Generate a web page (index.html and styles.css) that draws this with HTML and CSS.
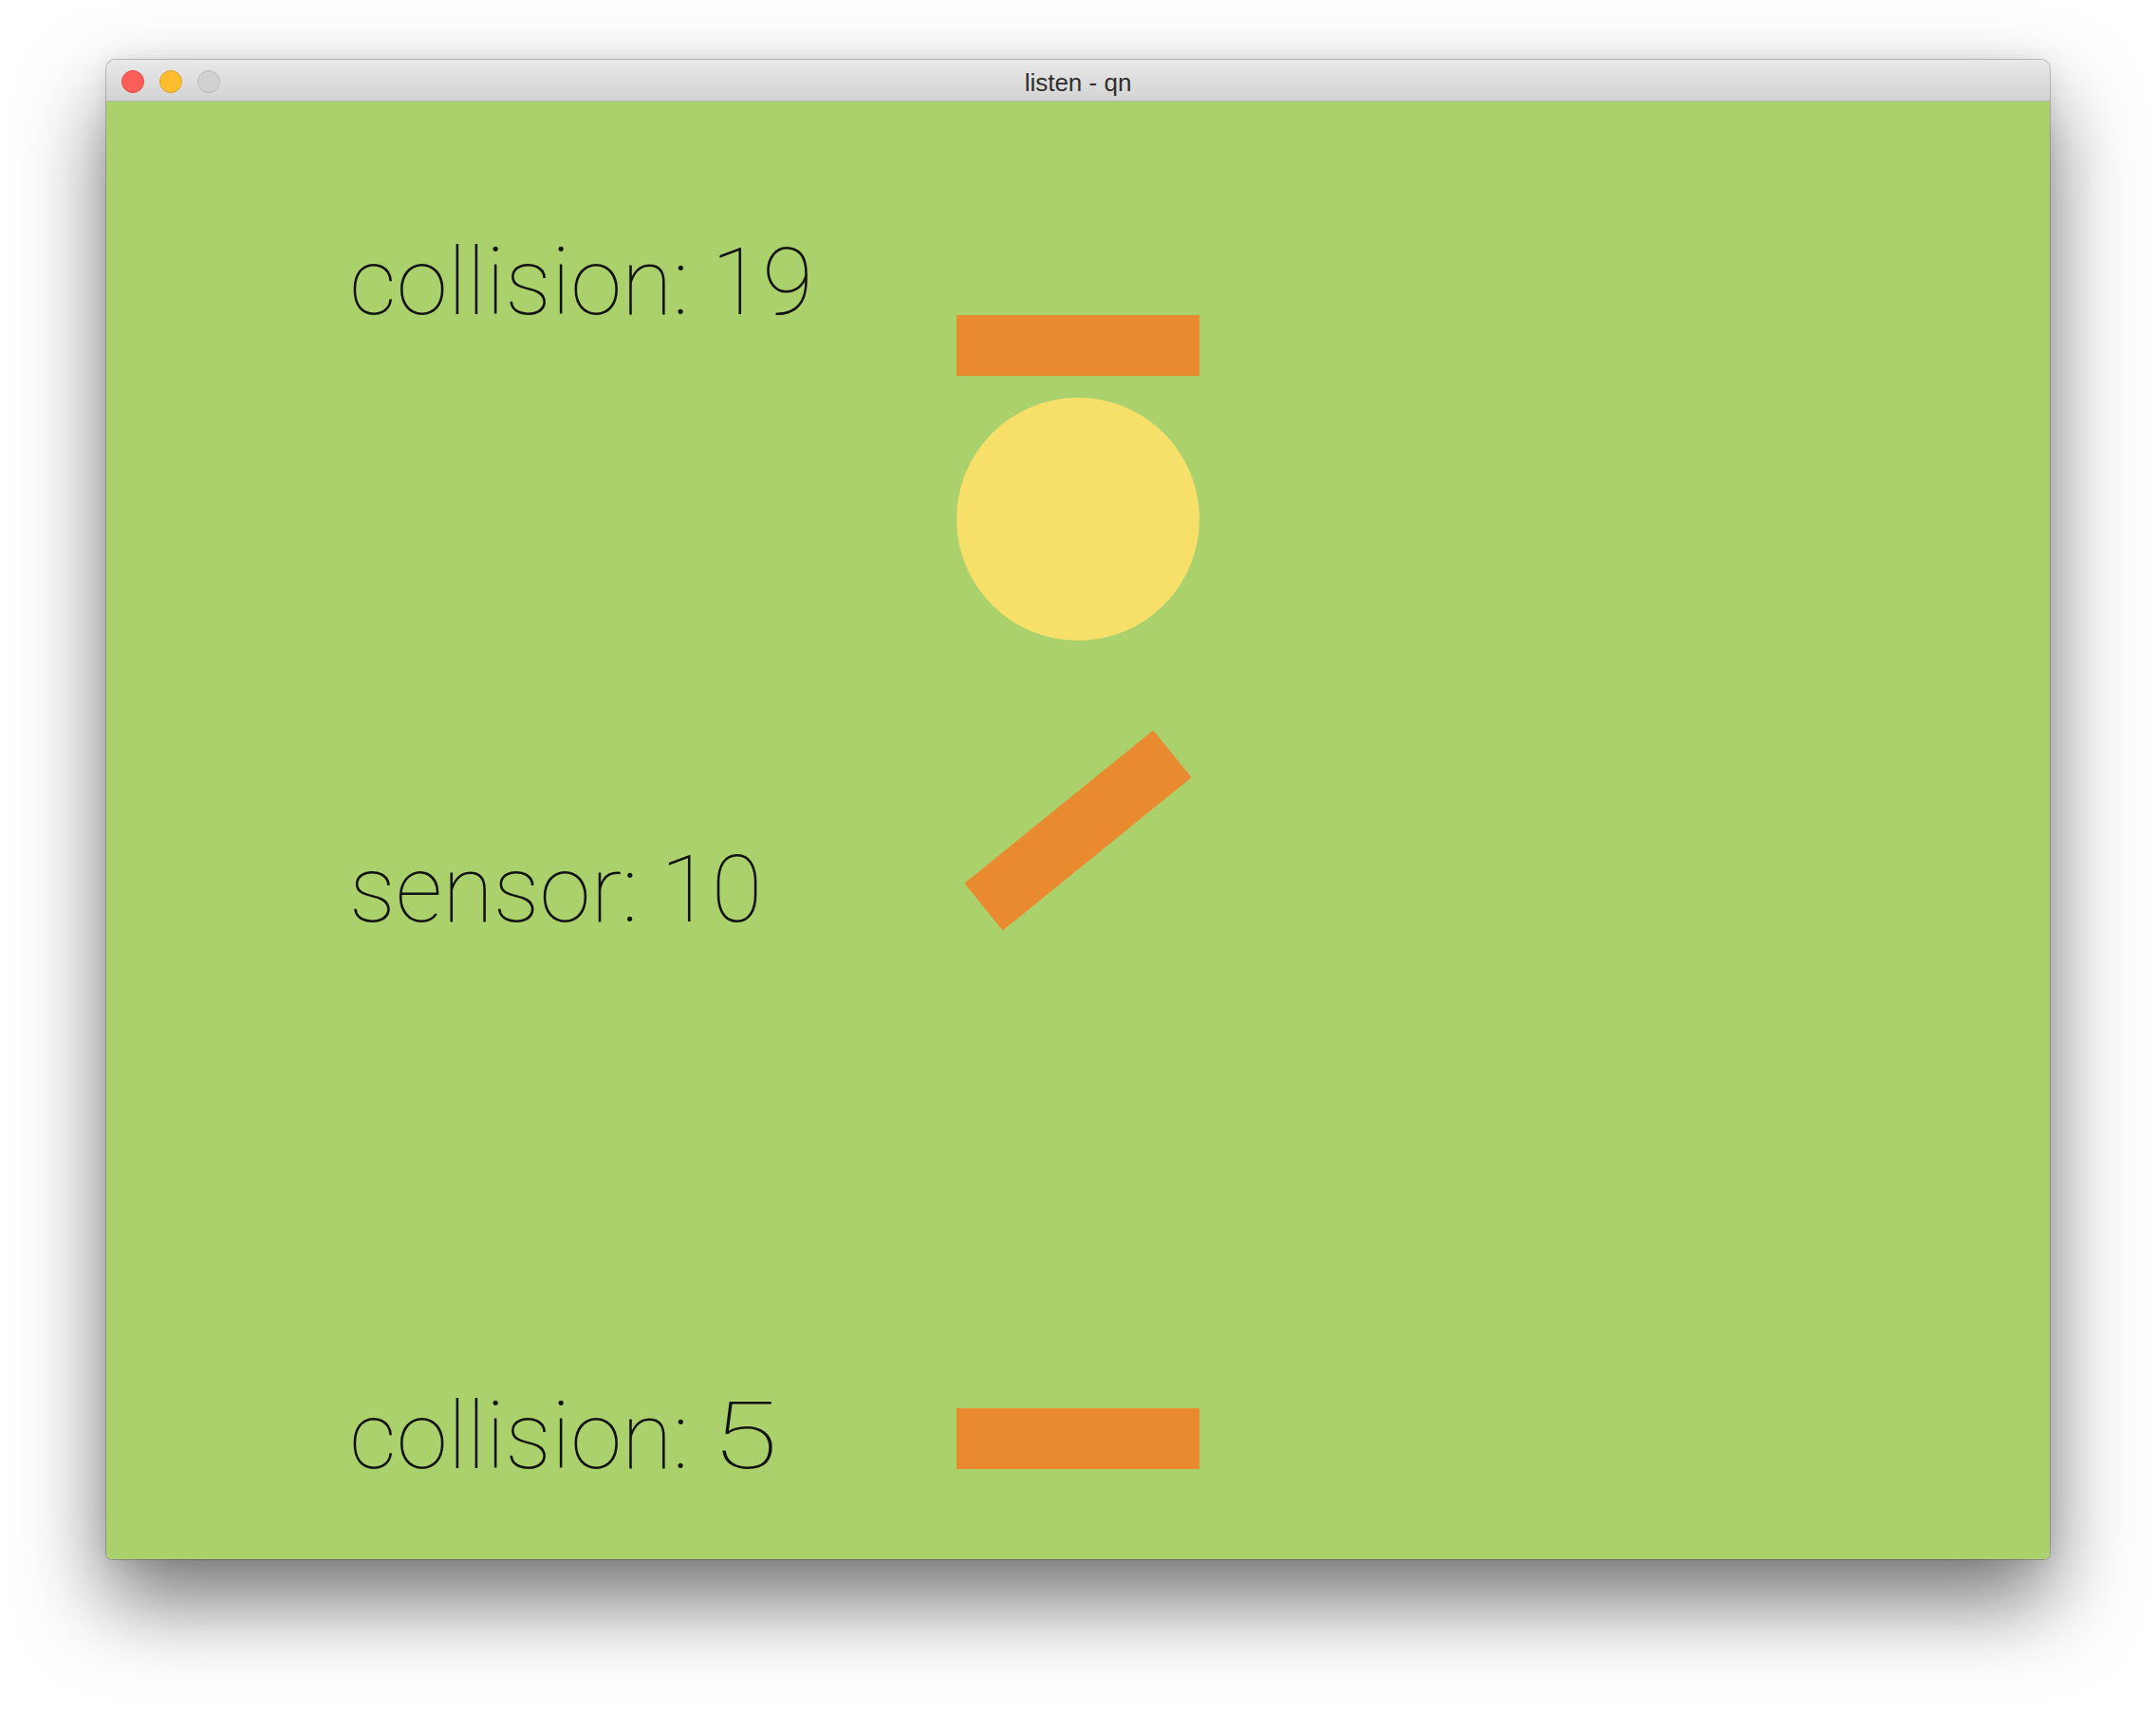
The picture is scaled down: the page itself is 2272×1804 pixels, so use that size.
FILE: index.html
```html
<!DOCTYPE html>
<html>
<head>
<meta charset="utf-8">
<title>listen - qn</title>
<link rel="stylesheet" href="styles.css">
</head>
<body>
<div class="window">
  <div class="titlebar">
    <div class="lights">
      <span class="light close"></span>
      <span class="light min"></span>
      <span class="light max"></span>
    </div>
    <div class="title">listen - qn</div>
    <div class="spacer"></div>
  </div>
  <div class="canvas">
    <div class="label label-top">collision: 19</div>
    <div class="label label-mid">sensor: 10</div>
    <div class="label label-bottom">collision: <span class="wide">5</span></div>
    <div class="bar bar-top"></div>
    <div class="ball"></div>
    <div class="bar bar-rot"></div>
    <div class="bar bar-bottom"></div>
  </div>
</div>
</body>
</html>
```

FILE: styles.css
```css
html, body {
  margin: 0;
  padding: 0;
  background: #ffffff;
}

body {
  width: 2272px;
  height: 1804px;
  overflow: hidden;
  padding-top: 63px;
  box-sizing: border-box;
}

.window {
  margin-left: 112px;
  width: 2048px;
  border-radius: 10px 10px 6px 6px;
  overflow: hidden;
  box-shadow: 0 0 0 1px rgba(0, 0, 0, 0.22), 0 44px 90px rgba(0, 0, 0, 0.55), 0 0 24px rgba(0, 0, 0, 0.08);
}

.titlebar {
  height: 41px;
  padding-top: 2px;
  border-bottom: 1px solid #b3b3b3;
  background: linear-gradient(#e9e9e9, #d3d3d3);
  display: grid;
  grid-template-columns: 1fr auto 1fr;
  align-items: center;
}

.lights {
  display: flex;
  gap: 16px;
  padding-left: 16px;
  align-items: center;
}

.light {
  width: 22px;
  height: 22px;
  border-radius: 50%;
  border: 1px solid transparent;
}

.close {
  background: #ff5f57;
  border-color: #e0443e;
}

.min {
  background: #ffbd2e;
  border-color: #dea123;
}

.max {
  background: #d1d1d1;
  border-color: #b9b9b9;
}

.title {
  font-family: "Liberation Sans", Arial, sans-serif;
  font-size: 26px;
  color: #2e2e2e;
  line-height: 1;
  padding-top: 2px;
}

.canvas {
  position: relative;
  height: 1536px;
  background: #abd16d;
  overflow: hidden;
}

.label {
  position: absolute;
  left: 256px;
  font-family: "Roboto", "Liberation Sans", sans-serif;
  font-weight: 100;
  font-size: 98px;
  line-height: 98px;
  color: #111111;
  white-space: nowrap;
}

.wide {
  display: inline-block;
  transform: scaleX(1.3);
  transform-origin: left center;
}

.label-top {
  top: 142px;
}

.label-mid {
  top: 782px;
}

.label-bottom {
  top: 1358px;
}

.bar {
  position: absolute;
  width: 256px;
  height: 64px;
  background: #ea8a30;
}

.bar-top {
  left: 896px;
  top: 225px;
}

.bar-bottom {
  left: 896px;
  top: 1377px;
}

.bar-rot {
  left: 896px;
  top: 736px;
  transform: rotate(-39deg);
}

.ball {
  position: absolute;
  left: 896px;
  top: 312px;
  width: 256px;
  height: 256px;
  border-radius: 50%;
  background: #f6e06a;
}
```
